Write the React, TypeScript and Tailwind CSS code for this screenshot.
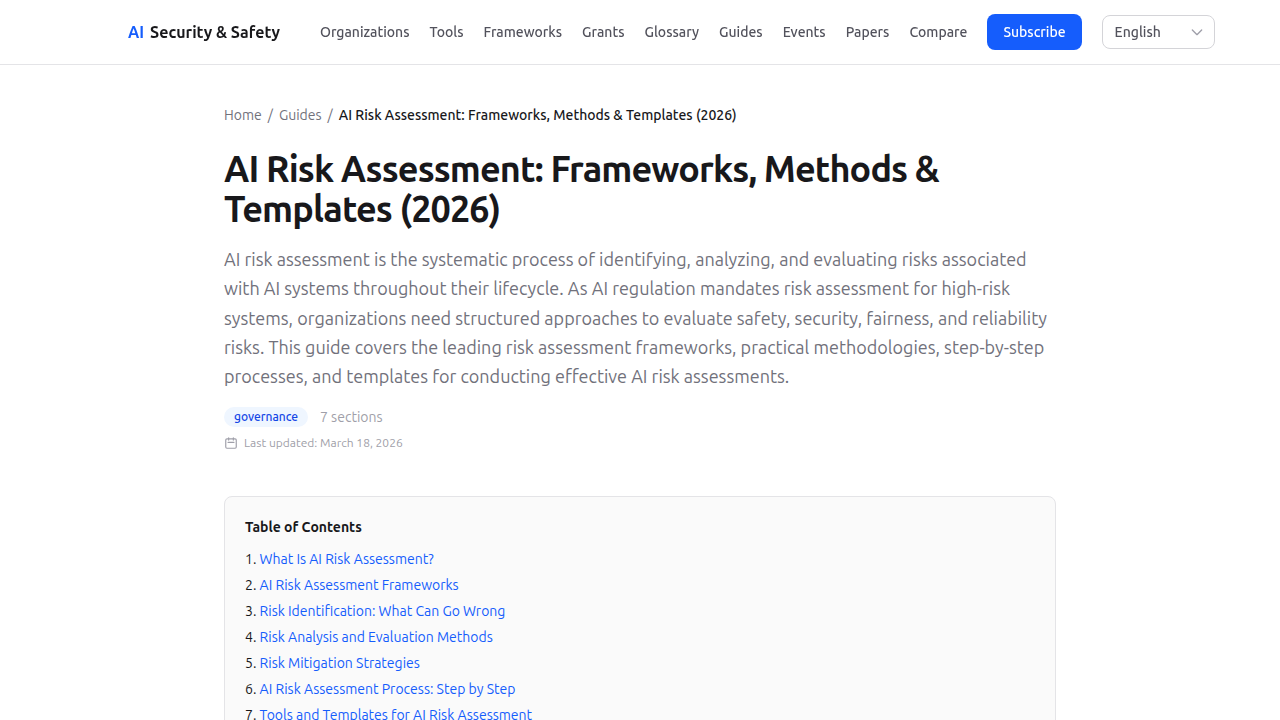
const navLinks = [
  "Organizations",
  "Tools",
  "Frameworks",
  "Grants",
  "Glossary",
  "Guides",
  "Events",
  "Papers",
  "Compare",
];

const sections = [
  "What Is AI Risk Assessment?",
  "AI Risk Assessment Frameworks",
  "Risk Identification: What Can Go Wrong",
  "Risk Analysis and Evaluation Methods",
  "Risk Mitigation Strategies",
  "AI Risk Assessment Process: Step by Step",
  "Tools and Templates for AI Risk Assessment",
];

const title = "AI Risk Assessment: Frameworks, Methods & Templates (2026)";

function Icon({ d, className }: { d: string; className: string }) {
  return (
    <svg
      className={className}
      viewBox="0 0 24 24"
      fill="none"
      stroke="currentColor"
      strokeWidth={2}
      strokeLinecap="round"
      strokeLinejoin="round"
      aria-hidden
    >
      <path d={d} />
    </svg>
  );
}

function Header() {
  return (
    <header className="sticky top-0 z-50 border-b border-zinc-200 bg-white/90 backdrop-blur-sm">
      <div className="mx-auto flex h-16 max-w-5xl items-center gap-10">
        <a href="#" className="flex shrink-0 gap-1.5 font-semibold text-zinc-900">
          <span className="text-blue-600">AI</span>
          <span>Security &amp; Safety</span>
        </a>
        <nav className="flex shrink-0 items-center gap-5 text-sm font-medium text-zinc-600">
          {navLinks.map((label) => (
            <a key={label} href="#">
              {label}
            </a>
          ))}
          <button type="button" className="rounded-lg bg-blue-600 px-4 py-2 text-white">
            Subscribe
          </button>
          <div className="relative">
            <select
              aria-label="Language"
              className="block w-[113px] appearance-none rounded-lg border border-zinc-300 bg-white py-1.5 pr-8 pl-3 text-zinc-600"
            >
              <option>English</option>
            </select>
            <Icon
              d="M19 9l-7 7-7-7"
              className="pointer-events-none absolute inset-y-0 right-2.5 my-auto h-4 w-4 text-zinc-400"
            />
          </div>
        </nav>
      </div>
    </header>
  );
}

function TableOfContents() {
  return (
    <nav
      aria-labelledby="toc"
      className="mt-[45px] rounded-lg border border-zinc-200 bg-zinc-50 p-5 text-sm"
    >
      <h2 id="toc" className="font-semibold">
        Table of Contents
      </h2>
      <ol className="mt-3 list-inside list-decimal space-y-1.5">
        {sections.map((label) => (
          <li key={label}>
            <a href="#" className="text-blue-600">
              {label}
            </a>
          </li>
        ))}
      </ol>
    </nav>
  );
}

export default function App() {
  return (
    <div className="min-h-screen bg-white font-['Ubuntu','Noto_Sans',sans-serif] text-zinc-900">
      <Header />
      <main className="mx-auto max-w-4xl px-8 py-10">
        <nav aria-label="Breadcrumb" className="flex gap-1.5 text-sm text-zinc-500">
          <a href="#">Home</a>
          <span>/</span>
          <a href="#">Guides</a>
          <span>/</span>
          <span className="font-medium text-zinc-900">{title}</span>
        </nav>
        <h1 className="mt-6 text-4xl font-bold tracking-tight">{title}</h1>
        <p className="mt-4 text-lg leading-relaxed text-zinc-500">
          AI risk assessment is the systematic process of identifying, analyzing, and evaluating
          risks associated with AI systems throughout their lifecycle. As AI regulation mandates
          risk assessment for high-risk systems, organizations need structured approaches to
          evaluate safety, security, fairness, and reliability risks. This guide covers the leading
          risk assessment frameworks, practical methodologies, step-by-step processes, and templates
          for conducting effective AI risk assessments.
        </p>
        <div className="mt-4 flex items-center gap-3">
          <span className="rounded-full bg-blue-50 px-2.5 py-0.5 text-xs font-medium text-blue-700">
            governance
          </span>
          <span className="text-sm text-zinc-400">7 sections</span>
        </div>
        <p className="mt-2 flex items-center gap-1.5 text-xs text-zinc-400">
          <Icon
            d="M8 7V3m8 4V3m-9 8h10M5 21h14a2 2 0 002-2V7a2 2 0 00-2-2H5a2 2 0 00-2 2v12a2 2 0 002 2z"
            className="h-3.5 w-3.5"
          />
          Last updated: March 18, 2026
        </p>
        <TableOfContents />
      </main>
    </div>
  );
}
